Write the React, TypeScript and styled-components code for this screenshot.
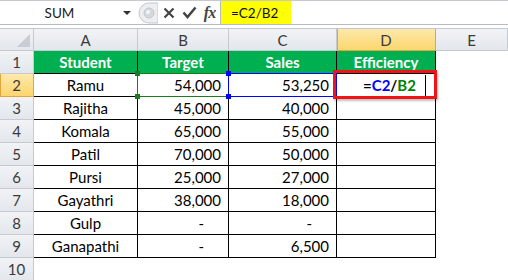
import React from "react";
import styled, { createGlobalStyle, css } from "styled-components";

const Global = createGlobalStyle`
  html, body { margin: 0; padding: 0; background: #fff; overflow: hidden; }
  body { font-family: Lato, "Liberation Sans", sans-serif; }
`;

const COLS = [34, 104, 91, 108, 99];

const Page = styled.div`
  width: 508px;
  height: 280px;
  display: flex;
  flex-direction: column;
  background: #fff;
`;

const FormulaBar = styled.div`
  display: flex;
  align-items: stretch;
  border-top: 1px solid #c6c9ce;
  border-bottom: 1px solid #b8bcc2;
  box-sizing: border-box;
  height: 25px;
  background: #fff;
`;

const NameBox = styled.div`
  width: 137px;
  position: relative;
  display: flex;
  align-items: center;
  justify-content: center;
  font-size: 13.5px;
  color: #1a1a1a;
  padding-right: 18px;
  box-sizing: border-box;
`;

const DropArrow = styled.span`
  position: absolute;
  right: 6px;
  top: 10px;
  width: 0;
  height: 0;
  border-left: 4px solid transparent;
  border-right: 4px solid transparent;
  border-top: 4px solid #333;
`;

const ButtonArea = styled.div`
  width: 83px;
  display: flex;
  align-items: center;
  box-sizing: border-box;
`;

const IconSlot = styled.div<{ $w: number }>`
  width: ${(p) => p.$w}px;
  height: 22px;
  display: flex;
  align-items: center;
  justify-content: center;
`;

const FxText = styled.span`
  font-family: "Liberation Serif", serif;
  font-style: italic;
  font-weight: 700;
  font-size: 16px;
  color: #444;
  letter-spacing: -1px;
`;

const FormulaInput = styled.div`
  flex: 1;
  display: flex;
  align-items: stretch;
  border-left: 1px solid #b8bcc2;
`;

const FormulaText = styled.span`
  background: #ffff00;
  width: 70px;
  padding-left: 10px;
  box-sizing: border-box;
  display: flex;
  align-items: center;
  font-size: 13.5px;
  color: #111;
`;

const Spacer = styled.div`
  height: 3px;
  border-bottom: 1px solid #c4c8ce;
  background: #fff;
`;

const Sheet = styled.div`
  position: relative;
  display: grid;
  grid-template-columns: ${COLS.map((c) => c + "px").join(" ")} 1fr;
  grid-template-rows: 22px repeat(10, 23px);
  flex: 1;
  overflow: hidden;
`;

const HeaderCell = styled.div<{ $active?: boolean }>`
  box-sizing: border-box;
  display: flex;
  align-items: center;
  justify-content: center;
  font-size: 15px;
  color: #3a3a3a;
  border-right: 1px solid #c5c9d0;
  border-bottom: 1px solid #c5c9d0;
  background: linear-gradient(#f1f3f6, #e3e7ec);
  ${(p) =>
    p.$active &&
    css`
      background: linear-gradient(#fde9ab, #fcd66e);
      border-right-color: #e2a640;
      border-bottom-color: #e2a640;
      box-shadow: inset 1px 0 0 #e2a640;
    `}
`;

const Corner = styled(HeaderCell)`
  position: relative;
  &::after {
    content: "";
    position: absolute;
    right: 3px;
    bottom: 3px;
    width: 0;
    height: 0;
    border-left: 13px solid transparent;
    border-bottom: 13px solid #c9cdd3;
  }
`;

type Align = "left" | "center" | "right";

const Cell = styled.div<{
  $align?: Align;
  $head?: boolean;
  $plain?: boolean;
  $pad?: number;
}>`
  box-sizing: border-box;
  display: flex;
  align-items: center;
  font-size: 15px;
  color: #000;
  white-space: nowrap;
  overflow: hidden;
  justify-content: ${(p) =>
    p.$align === "right" ? "flex-end" : p.$align === "left" ? "flex-start" : "center"};
  padding-right: ${(p) => p.$pad ?? 0}px;
  border-right: 1px solid ${(p) => (p.$plain ? "transparent" : "#000")};
  border-bottom: 1px solid ${(p) => (p.$plain ? "transparent" : "#000")};
  ${(p) =>
    p.$head &&
    css`
      background: #00b050;
      color: #fff;
      font-weight: 700;
    `}
`;

const Formula = styled.span`
  font-weight: 700;
  margin-left: 26px;
  font-size: 15px;
`;

const Ref = styled.span<{ $c: string }>`
  color: ${(p) => p.$c};
`;

const Caret = styled.span`
  position: absolute;
  left: 425px;
  top: 46px;
  width: 1px;
  height: 21px;
  background: #000;
`;

const SelBox = styled.div<{ $c: string; $l: number; $t: number; $w: number; $h: number }>`
  position: absolute;
  left: ${(p) => p.$l}px;
  top: ${(p) => p.$t}px;
  width: ${(p) => p.$w}px;
  height: ${(p) => p.$h}px;
  border: 1px solid ${(p) => p.$c};
  box-sizing: border-box;
  pointer-events: none;
`;

const Handle = styled.span<{ $c: string; $x: "l" | "r"; $y: "t" | "b" }>`
  position: absolute;
  width: 5px;
  height: 5px;
  background: ${(p) => p.$c};
  ${(p) => (p.$x === "l" ? "left: -3px;" : "right: -3px;")}
  ${(p) => (p.$y === "t" ? "top: -3px;" : "bottom: -3px;")}
`;

const RedBox = styled.div`
  position: absolute;
  left: 333px;
  top: 41px;
  width: 104px;
  height: 29px;
  border: 3px solid #f01414;
  box-sizing: border-box;
  box-shadow: 1px 2px 2px rgba(0, 0, 0, 0.25);
  pointer-events: none;
`;

const rows: [string, string, string][] = [
  ["Ramu", "54,000", "53,250"],
  ["Rajitha", "45,000", "40,000"],
  ["Komala", "65,000", "55,000"],
  ["Patil", "70,000", "50,000"],
  ["Pursi", "25,000", "27,000"],
  ["Gayathri", "38,000", "18,000"],
  ["Gulp", "-", "-"],
  ["Ganapathi", "-", "6,500"],
];

const padFor = (v: string) => (v === "-" ? 24 : 7);

export default function App() {
  return (
    <Page>
      <Global />
      <FormulaBar>
        <NameBox>
          SUM
          <DropArrow />
        </NameBox>
        <ButtonArea>
          <IconSlot $w={22}>
            <svg width="20" height="22" viewBox="0 0 20 22">
              <path
                d="M11 1 H20 V21 H11 A10 10 0 0 1 11 1 Z"
                fill="#eceef1"
                stroke="#c3c7cd"
              />
              <circle cx="11" cy="11" r="5" fill="#d5d8dd" stroke="#c2c6cc" />
              <circle cx="10" cy="10" r="2" fill="#f4f5f7" />
            </svg>
          </IconSlot>
          <IconSlot $w={20}>
            <svg width="12" height="12" viewBox="0 0 12 12">
              <path d="M1.5 1.5 L10.5 10.5 M10.5 1.5 L1.5 10.5" stroke="#444" strokeWidth="2.2" />
            </svg>
          </IconSlot>
          <IconSlot $w={20}>
            <svg width="15" height="13" viewBox="0 0 15 13">
              <path d="M1.5 6.5 L5.5 11 L13.5 1.5" stroke="#444" strokeWidth="2.5" fill="none" />
            </svg>
          </IconSlot>
          <IconSlot $w={21}>
            <FxText>fx</FxText>
          </IconSlot>
        </ButtonArea>
        <FormulaInput>
          <FormulaText>=C2/B2</FormulaText>
        </FormulaInput>
      </FormulaBar>
      <Spacer />
      <Sheet>
        <Corner />
        <HeaderCell>A</HeaderCell>
        <HeaderCell>B</HeaderCell>
        <HeaderCell>C</HeaderCell>
        <HeaderCell $active>D</HeaderCell>
        <HeaderCell>E</HeaderCell>

        <HeaderCell>1</HeaderCell>
        <Cell $head>Student</Cell>
        <Cell $head>Target</Cell>
        <Cell $head>Sales</Cell>
        <Cell $head>Efficiency</Cell>
        <Cell $plain />

        {rows.map((r, i) => (
          <React.Fragment key={r[0]}>
            <HeaderCell $active={i === 0}>{i + 2}</HeaderCell>
            <Cell>{r[0]}</Cell>
            <Cell $align="right" $pad={padFor(r[1])}>
              {r[1]}
            </Cell>
            <Cell $align="right" $pad={padFor(r[2])}>
              {r[2]}
            </Cell>
            <Cell $align="left">
              {i === 0 && (
                <Formula>
                  =<Ref $c="#0000ff">C2</Ref>/<Ref $c="#008000">B2</Ref>
                </Formula>
              )}
            </Cell>
            <Cell $plain />
          </React.Fragment>
        ))}

        <HeaderCell>10</HeaderCell>
        <Cell $plain />
        <Cell $plain />
        <Cell $plain />
        <Cell $plain />
        <Cell $plain />

        <SelBox $c="#1d7a1d" $l={137} $t={44} $w={92} $h={24}>
          <Handle $c="#1d7a1d" $x="l" $y="t" />
          <Handle $c="#1d7a1d" $x="l" $y="b" />
          <Handle $c="#1d7a1d" $x="r" $y="b" />
        </SelBox>
        <SelBox $c="#0000ff" $l={228} $t={44} $w={109} $h={24}>
          <Handle $c="#0000ff" $x="l" $y="t" />
          <Handle $c="#0000ff" $x="l" $y="b" />
        </SelBox>
        <Caret />
        <RedBox />
      </Sheet>
    </Page>
  );
}
